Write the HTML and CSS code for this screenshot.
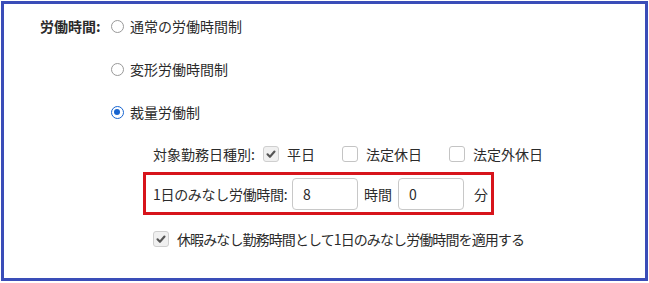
FILE: index.html
```html
<!DOCTYPE html>
<html lang="ja">
<head>
<meta charset="utf-8">
<link rel="stylesheet" href="styles.css">
</head>
<body>
<div class="frame">
  <div class="field">
    <div class="field-label">労働時間:</div>
    <div class="options">
      <label class="radio-row"><span class="radio"></span><span>通常の労働時間制</span></label>
      <label class="radio-row"><span class="radio"></span><span>変形労働時間制</span></label>
      <label class="radio-row"><span class="radio checked"></span><span>裁量労働制</span></label>
      <div class="sub">
        <div class="sub-row">
          <span class="sub-label">対象勤務日種別:</span>
          <span class="check-item"><span class="checkbox checked"><svg viewBox="0 0 16 16" width="16" height="16"><path d="M4 8.4 L6.8 11.2 L12 5.2" fill="none" stroke="#555" stroke-width="2.4" stroke-linecap="round" stroke-linejoin="round"/></svg></span><span>平日</span></span>
          <span class="check-item"><span class="checkbox"></span><span>法定休日</span></span>
          <span class="check-item"><span class="checkbox"></span><span>法定外休日</span></span>
        </div>
        <div class="highlight">
          <span class="hl-label">1日のみなし労働時間:</span>
          <span class="input">8</span>
          <span class="unit">時間</span>
          <span class="input">0</span>
          <span class="unit unit-last">分</span>
        </div>
        <div class="sub-row last">
          <span class="check-item"><span class="checkbox checked"><svg viewBox="0 0 16 16" width="16" height="16"><path d="M4 8.4 L6.8 11.2 L12 5.2" fill="none" stroke="#555" stroke-width="2.4" stroke-linecap="round" stroke-linejoin="round"/></svg></span><span class="long">休暇みなし勤務時間として1日のみなし労働時間を適用する</span></span>
        </div>
      </div>
    </div>
  </div>
</div>
</body>
</html>
```
FILE: styles.css
```css
* { box-sizing: border-box; }
html, body { margin: 0; padding: 0; background: #fff; }
body {
  font-family: "Noto Sans CJK JP", "Noto Sans", sans-serif;
  font-size: 14px;
  line-height: 20px;
  color: #2b2b2b;
  white-space: nowrap;
}
.frame {
  margin: 1px 0 0 1px;
  width: 647px;
  height: 280px;
  border: 3px solid #3a4db8;
  padding: 12px 0 0 36px;
}
.field { display: flex; align-items: flex-start; }
.field-label {
  font-weight: bold;
  width: 71px;
  height: 20px;
  flex: none;
}
.options { display: flex; flex-direction: column; }
.radio-row {
  display: flex;
  align-items: center;
  height: 20px;
  margin-bottom: 23px;
}
.radio-row:nth-child(3) { margin-bottom: 22px; }
.radio {
  width: 13px;
  height: 13px;
  border: 1px solid #999;
  border-radius: 50%;
  margin-right: 6px;
  background: #fff;
  flex: none;
}
.radio.checked {
  border: 1.5px solid #1664d0;
  position: relative;
}
.radio.checked::after {
  content: "";
  position: absolute;
  left: 2px; top: 2px;
  width: 6px; height: 6px;
  border-radius: 50%;
  background: #1664d0;
}
.sub { margin-left: 42px; display: flex; flex-direction: column; }
.sub-row { display: flex; align-items: center; height: 20px; }
.sub-label { margin-right: 8px; flex: none; }
.check-item { display: flex; align-items: center; margin-right: 27px; flex: none; }
.checkbox {
  width: 16px;
  height: 16px;
  border: 1px solid #c4c4c4;
  border-radius: 3px;
  background: #fff;
  margin-right: 8px;
  display: flex;
  align-items: center;
  justify-content: center;
  flex: none;
}
.checkbox.checked { background: #f0f0f0; border-color: #cfcfcf; }
.checkbox svg { display: block; }
.highlight {
  margin: 8px 0 0 -10px;
  width: 351px;
  height: 43px;
  border: 3px solid #d7141b;
  padding: 3px 0 0 7px;
  display: flex;
  align-items: flex-start;
}
.hl-label { line-height: 32px; width: 139px; flex: none; letter-spacing: -0.3px; }
.input {
  width: 66px;
  height: 32px;
  border: 1px solid #c8c8c8;
  border-radius: 4px;
  padding-left: 10px;
  line-height: 30px;
  flex: none;
}
.unit { line-height: 32px; margin: 0 6px; flex: none; }
.unit-last { margin-left: 10px; }
.sub-row.last { margin-top: 14px; }
.long { letter-spacing: -0.9px; }
```
